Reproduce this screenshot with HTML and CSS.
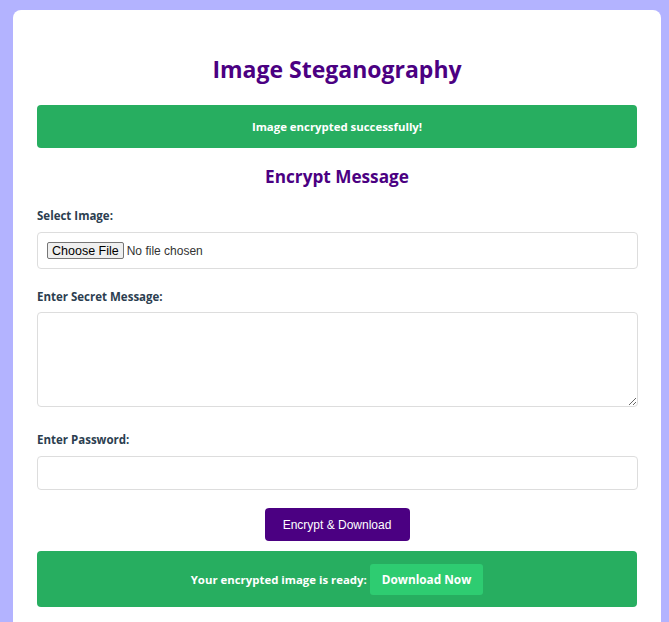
FILE: index.html
```html
<!DOCTYPE html>
<html>
<head>
<meta charset="utf-8">
<link rel="stylesheet" href="styles.css">
</head>
<body>
<div class="card">
  <h1 class="title">Image Steganography</h1>
  <div class="alert">Image encrypted successfully!</div>
  <h2 class="subtitle">Encrypt Message</h2>
  <form class="form">
    <div class="field">
      <label class="label">Select Image:</label>
      <div class="box file-box"><input type="file" class="file"></div>
    </div>
    <div class="field field-tall">
      <label class="label label-tight">Enter Secret Message:</label>
      <textarea class="box textarea"></textarea>
    </div>
    <div class="field">
      <label class="label">Enter Password:</label>
      <input type="password" class="box pass">
    </div>
    <div class="actions"><button type="button" class="btn">Encrypt &amp; Download</button></div>
  </form>
  <div class="ready">
    <span class="ready-text">Your encrypted image is ready:</span>
    <a class="dl">Download Now</a>
  </div>
</div>
</body>
</html>
```
FILE: styles.css
```css
html, body { margin: 0; padding: 0; }
body {
  background: #b3b3ff;
  font-family: "Open Sans", "Noto Sans", sans-serif;
  color: #2c3e50;
}
.card {
  width: 648px;
  box-sizing: border-box;
  margin: 10px 0 0 13px;
  background: #fff;
  border-radius: 8px;
  padding: 24px 24px 24px 24px;
}
.title {
  margin: 19px 0 20px 0;
  font-size: 23px;
  line-height: 32px;
  text-align: center;
  color: #4b0082;
  font-weight: 700;
}
.alert {
  background: #27ae60;
  color: #fff;
  border-radius: 4px;
  height: 43px;
  display: flex;
  align-items: center;
  justify-content: center;
  font-size: 11.4px;
  font-weight: 700;
}
.subtitle {
  margin: 16px 0 18px 0;
  text-align: center;
  font-size: 17.2px;
  line-height: 26px;
  color: #4b0082;
  font-weight: 700;
}
.form { display: flex; flex-direction: column; }
.field { display: flex; flex-direction: column; margin-bottom: 20px; }
.field-tall { margin-bottom: 25px; }
.label {
  font-size: 11.5px;
  font-weight: 700;
  line-height: 16px;
  margin-bottom: 8px;
  color: #2c3e50;
}
.label-tight { margin-bottom: 7px; }
.box {
  box-sizing: border-box;
  width: 601px;
  border: 1px solid #ddd;
  border-radius: 4px;
  background: #fff;
}
.file-box {
  height: 37px;
  padding: 0 9px;
  display: flex;
  align-items: center;
}
.file {
  font-family: Arial, "Liberation Sans", sans-serif;
  font-size: 12px;
  color: #333;
}
.file::file-selector-button {
  font-family: Arial, "Liberation Sans", sans-serif;
  font-size: 12.5px;
  padding: 0 4px;
  height: 17px;
  margin-right: 3px;
  border: 1px solid #767676;
  border-radius: 2px;
  background: #efefef;
  color: #000;
}
.textarea { height: 95px; resize: vertical; display: block; margin: 0; }
.pass { height: 34px; margin: 0; display: block; }
.actions { display: flex; justify-content: center; margin-top: -2px; }
.btn {
  background: #4b0082;
  color: #fff;
  border: none;
  border-radius: 4px;
  width: 145px;
  height: 33px;
  font-family: Arial, "Liberation Sans", sans-serif;
  font-size: 12px;
}
.ready {
  margin-top: 10px;
  background: #27ae60;
  border-radius: 4px;
  height: 56px;
  display: flex;
  align-items: center;
  justify-content: center;
  gap: 3px;
  color: #fff;
  font-size: 11.4px;
  font-weight: 700;
}
.dl {
  background: #2ecc71;
  border-radius: 3px;
  height: 31px;
  padding: 0 12px;
  display: flex;
  align-items: center;
  font-size: 11.8px;
}
```
